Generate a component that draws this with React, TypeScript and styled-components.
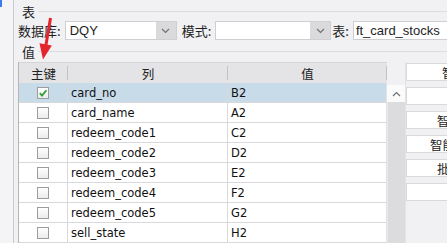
import React from 'react';
import styled, { createGlobalStyle } from 'styled-components';

const GlobalStyle = createGlobalStyle`
  html, body {
    margin: 0;
    padding: 0;
    background: #f1f1f3;
  }
`;

const cjk = `'Noto Sans CJK SC', 'Noto Sans', sans-serif`;
const latin = `'Liberation Sans', 'Noto Sans CJK SC', sans-serif`;
const cellFont = `'DejaVu Sans', 'Noto Sans CJK SC', sans-serif`;

const rows = [
  { key: true, column: 'card_no', value: 'B2' },
  { key: false, column: 'card_name', value: 'A2' },
  { key: false, column: 'redeem_code1', value: 'C2' },
  { key: false, column: 'redeem_code2', value: 'D2' },
  { key: false, column: 'redeem_code3', value: 'E2' },
  { key: false, column: 'redeem_code4', value: 'F2' },
  { key: false, column: 'redeem_code5', value: 'G2' },
  { key: false, column: 'sell_state', value: 'H2' },
];

const actions = [
  { label: '智', indent: 35 },
  { label: '', indent: 0 },
  { label: '智', indent: 30 },
  { label: '智能', indent: 23 },
  { label: '批', indent: 30 },
  { label: '', indent: 0 },
];

function Chevron({ up }: { up?: boolean }) {
  return (
    <svg width="9" height="6" viewBox="0 0 9 6">
      <path
        d={up ? 'M1 5 L4.5 1.5 L8 5' : 'M1 1 L4.5 4.5 L8 1'}
        fill="none"
        stroke="#6e6e72"
        strokeWidth="1.1"
      />
    </svg>
  );
}

function CheckBox({ checked }: { checked: boolean }) {
  return (
    <Box>
      {checked && (
        <svg width="10" height="10" viewBox="0 0 10 10">
          <path
            d="M1.8 5.2 L4 7.6 L8.4 2.2"
            fill="none"
            stroke="#2f9e35"
            strokeWidth="1.8"
          />
        </svg>
      )}
    </Box>
  );
}

export default function App() {
  return (
    <>
      <GlobalStyle />
      <Window>
        <SideRail>
          <RailMark />
        </SideRail>
        <Main>
          <GroupTitle>表</GroupTitle>
          <FormRow>
            <FieldLabel>数据库:</FieldLabel>
            <Combo width={112} after={5}>
              <ComboValue>DQY</ComboValue>
              <ComboArrow>
                <Chevron />
              </ComboArrow>
            </Combo>
            <FieldLabel>模式:</FieldLabel>
            <Combo width={116} after={1}>
              <ComboValue />
              <ComboArrow>
                <Chevron />
              </ComboArrow>
            </Combo>
            <FieldLabel>表:</FieldLabel>
            <TextField>ft_card_stocks</TextField>
          </FormRow>
          <GroupTitle tall>值</GroupTitle>
          <Body>
            <Table>
              <HeadCell>主键</HeadCell>
              <HeadCell>列</HeadCell>
              <HeadCell>值</HeadCell>
              {rows.map((r) => (
                <React.Fragment key={r.column}>
                  <Cell selected={r.key} center>
                    <CheckBox checked={r.key} />
                  </Cell>
                  <Cell selected={r.key}>{r.column}</Cell>
                  <Cell selected={r.key} last>
                    {r.value}
                  </Cell>
                </React.Fragment>
              ))}
            </Table>
            <ScrollBar>
              <ScrollCorner />
              <ScrollButton>
                <Chevron up />
              </ScrollButton>
              <ScrollTrack />
            </ScrollBar>
            <ActionColumn>
              {actions.map((a, i) => (
                <ActionButton key={i} indent={a.indent}>
                  {a.label}
                </ActionButton>
              ))}
            </ActionColumn>
          </Body>
        </Main>
        <Pointer width="60" height="64" viewBox="0 0 60 64">
          <line x1="50.5" y1="18" x2="45.8" y2="46" stroke="#e5242b" strokeWidth="3" />
          <polygon points="39.5,43.2 51.8,45.4 43,59.5" fill="#e5242b" />
        </Pointer>
      </Window>
    </>
  );
}

const Window = styled.div`
  position: relative;
  width: 447px;
  height: 243px;
  overflow: hidden;
  display: flex;
  background: #f1f1f3;
  color: #1e1e1e;
  font-family: ${cjk};
`;

const SideRail = styled.div`
  width: 13px;
  flex: none;
  border-right: 1px solid #c9c9cc;
  background: #f4f4f6;
`;

const RailMark = styled.div`
  width: 2px;
  height: 7px;
  background: #3d7cf0;
`;

const Main = styled.div`
  flex: 1;
  display: flex;
  flex-direction: column;
  padding-left: 4px;
  min-width: 0;
`;

const GroupTitle = styled.div<{ tall?: boolean }>`
  height: ${({ tall }) => (tall ? 22 : 21)}px;
  display: flex;
  align-items: center;
  gap: 3px;
  padding-left: 4px;
  padding-top: ${({ tall }) => (tall ? 0 : 1)}px;
  box-sizing: border-box;
  font-size: 13px;
  line-height: 1;

  &::after {
    content: '';
    flex: 1;
    border-top: 1px solid #dcdcdf;
  }
`;

const FormRow = styled.div`
  height: 19px;
  display: flex;
  align-items: stretch;
`;

const FieldLabel = styled.span`
  display: flex;
  align-items: center;
  font-size: 13px;
  padding-right: 4px;
  white-space: nowrap;
`;

const Combo = styled.div<{ width: number; after: number }>`
  width: ${({ width }) => width}px;
  margin-right: ${({ after }) => after}px;
  flex: none;
  display: flex;
  box-sizing: border-box;
  border: 1px solid #cfcfd2;
  background: #ffffff;
`;

const ComboValue = styled.div`
  flex: 1;
  display: flex;
  align-items: center;
  padding-left: 4px;
  font-family: ${latin};
  font-size: 13px;
`;

const ComboArrow = styled.div`
  width: 20px;
  display: flex;
  align-items: center;
  justify-content: center;
  background: #dadadd;
`;

const TextField = styled.div`
  width: 120px;
  flex: none;
  box-sizing: border-box;
  border: 1px solid #cfcfd2;
  background: #ffffff;
  display: flex;
  align-items: center;
  padding-left: 2px;
  font-family: ${latin};
  font-size: 13px;
  white-space: nowrap;
`;

const Body = styled.div`
  flex: 1;
  display: flex;
  min-height: 0;
`;

const Table = styled.div`
  width: 369px;
  flex: none;
  box-sizing: border-box;
  border-left: 1px solid #b5b5b8;
  display: grid;
  grid-template-columns: 49px 160px 159px;
  grid-auto-rows: 20px;
  grid-template-rows: 21px;
  align-content: start;
  background: #ffffff;
`;

const HeadCell = styled.div`
  display: flex;
  align-items: center;
  justify-content: center;
  font-size: 12.5px;
  color: #222;
  border-top: 1px solid #d5d5d8;
  background: linear-gradient(#c2c2c5, #c2c2c5) right center / 1px 14px no-repeat,
    #e4e4e6;
`;

const Cell = styled.div<{ selected?: boolean; center?: boolean; last?: boolean }>`
  display: flex;
  align-items: center;
  justify-content: ${({ center }) => (center ? 'center' : 'flex-start')};
  padding-left: ${({ center }) => (center ? 0 : 3)}px;
  box-sizing: border-box;
  border-bottom: 1px solid #d9d9dc;
  border-right: 1px solid ${({ last }) => (last ? '#e2e2e4' : '#d9d9dc')};
  background: ${({ selected }) => (selected ? '#c8dbe9' : '#ffffff')};
  font-family: ${cellFont};
  font-size: 11.5px;
  color: #111;
  white-space: nowrap;
  overflow: hidden;
`;

const Box = styled.div`
  width: 12px;
  height: 12px;
  box-sizing: border-box;
  border: 1px solid #9c9c9f;
  background: linear-gradient(#ffffff, #ececee);
  display: flex;
  align-items: center;
  justify-content: center;
`;

const ScrollBar = styled.div`
  width: 18px;
  flex: none;
  display: flex;
  flex-direction: column;
  border-right: 1px solid #e3e3e6;
`;

const ScrollCorner = styled.div`
  height: 23px;
  background: #f1f1f3;
`;

const ScrollButton = styled.div`
  height: 17px;
  display: flex;
  align-items: center;
  justify-content: center;
  background: #fbfbfc;
`;

const ScrollTrack = styled.div`
  flex: 1;
  background: #dcdcdf;
  border-left: 1px solid #e9e9eb;
`;

const ActionColumn = styled.div`
  display: flex;
  flex-direction: column;
  gap: 6px;
  padding-top: 1px;
`;

const ActionButton = styled.div<{ indent: number }>`
  width: 70px;
  height: 18px;
  box-sizing: border-box;
  border: 1px solid #d9d9dc;
  border-right: none;
  background: #ffffff;
  display: flex;
  align-items: center;
  padding-left: ${({ indent }) => indent}px;
  font-size: 12.5px;
  white-space: nowrap;
`;

const Pointer = styled.svg`
  position: absolute;
  left: 0;
  top: 0;
  pointer-events: none;
`;
